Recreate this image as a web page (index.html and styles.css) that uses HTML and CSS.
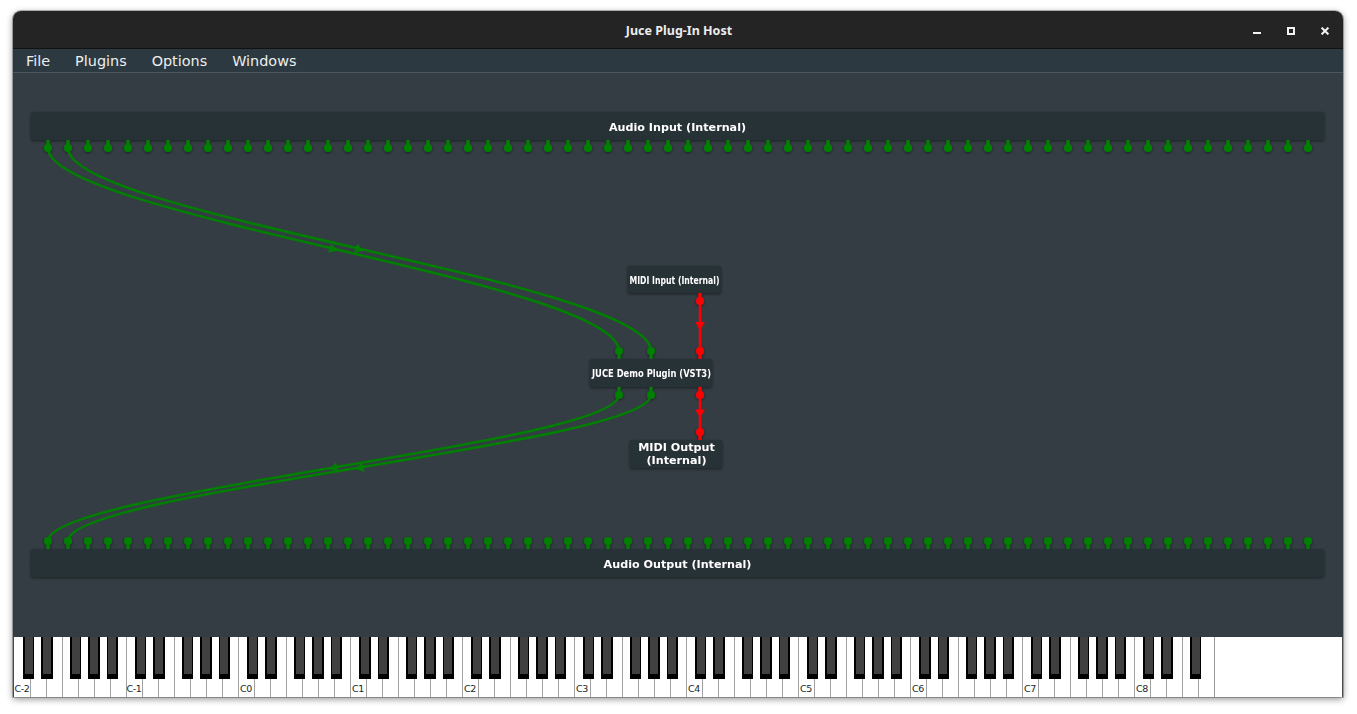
FILE: index.html
```html
<!DOCTYPE html>
<html lang="en">
<head>
<meta charset="utf-8">
<title>Juce Plug-In Host</title>
<link rel="stylesheet" href="styles.css">
</head>
<body>
<div class="window">
  <header class="titlebar">
    <div class="title">Juce Plug-In Host</div>
    <div class="controls">
      <span class="ctl"><svg width="8" height="8" viewBox="0 0 8 8"><rect class="ico" x="0" y="5" width="8" height="2"/></svg></span>
      <span class="ctl"><svg width="8" height="8" viewBox="0 0 8 8"><rect class="ico-line" x="1" y="1" width="6" height="6"/></svg></span>
      <span class="ctl"><svg width="8" height="8" viewBox="0 0 8 8"><path class="ico-line" d="M0.6 0.6 L7.4 7.4 M7.4 0.6 L0.6 7.4"/></svg></span>
    </div>
  </header>
  <nav class="menubar">
    <span class="menu-item">File</span>
    <span class="menu-item">Plugins</span>
    <span class="menu-item">Options</span>
    <span class="menu-item">Windows</span>
  </nav>
  <main class="graph">
    <svg class="graph-svg" width="1330" height="564" viewBox="13 73 1330 564">
      <defs>
        <filter id="sh" x="-10%" y="-40%" width="120%" height="190%">
          <feDropShadow dx="0" dy="1" stdDeviation="1.5" flood-color="#000" flood-opacity="0.5"/>
        </filter>
        <pattern id="pinsOut" x="38" y="140" width="20" height="16" patternUnits="userSpaceOnUse">
          <rect class="audio" x="8.4" y="0" width="3.2" height="8"/>
          <circle class="audio" cx="10" cy="8" r="4"/>
        </pattern>
        <pattern id="pinsIn" x="38" y="533" width="20" height="16" patternUnits="userSpaceOnUse">
          <rect class="audio" x="8.4" y="8" width="3.2" height="8"/>
          <circle class="audio" cx="10" cy="8" r="4"/>
        </pattern>
      </defs>

      <!-- Audio Input node -->
      <g class="node">
        <rect class="box" x="31" y="112" width="1293" height="28" rx="2"/>
        <rect class="pin-row-out" x="38" y="140" width="1280" height="16"/>
        <text class="node-label" x="677.5" y="127.2">Audio Input (Internal)</text>
      </g>

      <!-- Audio Output node -->
      <g class="node">
        <rect class="box" x="31" y="549" width="1293" height="28" rx="2"/>
        <rect class="pin-row-in" x="38" y="533" width="1280" height="16"/>
        <text class="node-label" x="677.5" y="564">Audio Output (Internal)</text>
      </g>

      <!-- MIDI Input node -->
      <g class="node">
        <rect class="box" x="628" y="266" width="93" height="27" rx="2"/>
        <rect class="midi" x="698.4" y="293" width="3.2" height="8"/>
        <circle class="midi" cx="700" cy="301" r="4"/>
        <text class="node-label" x="674.5" y="280" textLength="90" lengthAdjust="spacingAndGlyphs">MIDI Input (Internal)</text>
      </g>

      <!-- Plugin node -->
      <g class="node">
        <rect class="box" x="590" y="359" width="122" height="28" rx="2"/>
        <rect class="audio" x="617.4" y="351" width="3.2" height="8"/>
        <circle class="audio" cx="619" cy="351" r="4"/>
        <rect class="audio" x="649.4" y="351" width="3.2" height="8"/>
        <circle class="audio" cx="651" cy="351" r="4"/>
        <rect class="midi" x="698.4" y="351" width="3.2" height="8"/>
        <circle class="midi" cx="700" cy="351" r="4"/>
        <rect class="audio" x="617.4" y="387" width="3.2" height="8"/>
        <circle class="audio" cx="619" cy="395" r="4"/>
        <rect class="audio" x="649.4" y="387" width="3.2" height="8"/>
        <circle class="audio" cx="651" cy="395" r="4"/>
        <rect class="midi" x="698.4" y="387" width="3.2" height="8"/>
        <circle class="midi" cx="700" cy="395" r="4"/>
        <text class="node-label" x="651.5" y="373.5" textLength="119" lengthAdjust="spacingAndGlyphs">JUCE Demo Plugin (VST3)</text>
      </g>

      <!-- MIDI Output node -->
      <g class="node">
        <rect class="box" x="630" y="440" width="92" height="28" rx="2"/>
        <rect class="midi" x="698.4" y="432" width="3.2" height="8"/>
        <circle class="midi" cx="700" cy="432" r="4"/>
        <text class="node-label" x="676.5" y="447.5">MIDI Output</text>
        <text class="node-label" x="676.5" y="460.5">(Internal)</text>
      </g>

      <!-- Connections -->
      <path class="wire-audio" d="M48 148 C48 215, 619 282, 619 351"/>
      <path class="wire-audio" d="M68 148 C68 215, 651 282, 651 351"/>
      <path class="wire-audio" d="M619 395 C619 443.2, 48 491.4, 48 541"/>
      <path class="wire-audio" d="M651 395 C651 443.2, 68 491.4, 68 541"/>
      <path class="wire-midi" d="M700 301 L700 351"/>
      <path class="wire-midi" d="M700 395 L700 432"/>

      <polygon class="audio" points="-4,5 -4,-5 4,0" transform="translate(333.5 249.5) rotate(19.57)"/>
      <polygon class="audio" points="-4,5 -4,-5 4,0" transform="translate(359.5 249.5) rotate(19.2)"/>
      <polygon class="audio" points="-4,5 -4,-5 4,0" transform="translate(333.5 468) rotate(165.66)"/>
      <polygon class="audio" points="-4,5 -4,-5 4,0" transform="translate(359.5 468) rotate(165.94)"/>
      <polygon class="midi" points="-4,5 -4,-5 4,0" transform="translate(700 326) rotate(90)"/>
      <polygon class="midi" points="-4,5 -4,-5 4,0" transform="translate(700 413.5) rotate(90)"/>
    </svg>
  </main>
  <div class="keyboard">
    <div class="keys">
      <div class="octave"><span class="label">C-2</span></div>
      <div class="octave"><span class="label">C-1</span></div>
      <div class="octave"><span class="label">C0</span></div>
      <div class="octave"><span class="label">C1</span></div>
      <div class="octave"><span class="label">C2</span></div>
      <div class="octave"><span class="label">C3</span></div>
      <div class="octave"><span class="label">C4</span></div>
      <div class="octave"><span class="label">C5</span></div>
      <div class="octave"><span class="label">C6</span></div>
      <div class="octave"><span class="label">C7</span></div>
      <div class="octave partial"><span class="label">C8</span></div>
    </div>
  </div>
</div>
</body>
</html>
```

FILE: styles.css
```css
html, body {
  margin: 0;
  padding: 0;
  background: #ffffff;
}

body {
  width: 1357px;
  height: 714px;
  overflow: hidden;
}

.window {
  margin: 11px 0 0 13px;
  width: 1330px;
  height: 686px;
  display: flex;
  flex-direction: column;
  border-radius: 8px 8px 0 0;
  overflow: hidden;
  box-shadow: 0 2px 7px rgba(0, 0, 0, 0.45), 0 0 0 1px rgba(0, 0, 0, 0.25);
}

/* ---------- title bar ---------- */
.titlebar {
  height: 37px;
  flex: none;
  background: #242424;
  border-bottom: 1px solid #121212;
  display: grid;
  grid-template-columns: 1fr auto 1fr;
  align-items: center;
}

.title {
  grid-column: 2;
  font-family: "Noto Sans", "DejaVu Sans", sans-serif;
  font-weight: 700;
  font-size: 12.5px;
  color: #ececec;
  padding-top: 1px;
  padding-left: 2px;
}

.controls {
  grid-column: 3;
  justify-self: end;
  display: flex;
  padding-right: 1px;
  padding-top: 2px;
}

.ctl {
  width: 34px;
  display: flex;
  justify-content: center;
  align-items: center;
}

.ctl svg {
  display: block;
}

.ico {
  fill: #f2f2f2;
}

.ico-line {
  fill: none;
  stroke: #f2f2f2;
  stroke-width: 2;
}

/* ---------- menu bar ---------- */
.menubar {
  height: 23px;
  flex: none;
  background: #2c3940;
  border-bottom: 1px solid #4c575d;
  display: flex;
  align-items: center;
  gap: 25px;
  padding-left: 13px;
  font-family: "DejaVu Sans", sans-serif;
  font-size: 14.4px;
  color: #eeeeee;
}

.menu-item {
  line-height: 23px;
  padding-top: 2px;
}

/* ---------- graph ---------- */
.graph {
  flex: none;
  height: 564px;
  background: #343d43;
}

.graph-svg {
  display: block;
}

.node {
  filter: url(#sh);
}

.box {
  fill: #283036;
}

.node-label {
  font-family: "DejaVu Sans", sans-serif;
  font-weight: 700;
  font-size: 11.17px;
  fill: #ffffff;
  text-anchor: middle;
  dominant-baseline: central;
}

.audio {
  fill: #008000;
}

.midi {
  fill: #ff0000;
}

.pin-row-out {
  fill: url(#pinsOut);
}

.pin-row-in {
  fill: url(#pinsIn);
}

.wire-audio {
  fill: none;
  stroke: #008000;
  stroke-width: 2.5;
}

.wire-midi {
  fill: none;
  stroke: #ff0000;
  stroke-width: 2.5;
}

/* ---------- keyboard ---------- */
.keyboard {
  flex: none;
  height: 60px;
  background: #ffffff;
  border-left: 1px solid #4a4a4a;
  border-right: 1px solid #4a4a4a;
  display: flex;
}

.keys {
  display: flex;
  border-right: 1px solid #9a9a9a;
}

.octave {
  width: 112px;
  height: 60px;
  display: flex;
  align-items: flex-end;
  background:
    linear-gradient(90deg,
      transparent 10.7px, #404040 10.7px 19.1px,
      transparent 19.1px 28.9px, #404040 28.9px 37.3px,
      transparent 37.3px 57.6px, #404040 57.6px 66px,
      transparent 66px 75.8px, #404040 75.8px 84.2px,
      transparent 84.2px 94px, #404040 94px 102.4px,
      transparent 102.4px) 0 0 / 112px 37px no-repeat,
    linear-gradient(90deg,
      transparent 9.3px, #000 9.3px 20.5px,
      transparent 20.5px 27.5px, #000 27.5px 38.7px,
      transparent 38.7px 56.2px, #000 56.2px 67.4px,
      transparent 67.4px 74.4px, #000 74.4px 85.6px,
      transparent 85.6px 92.6px, #000 92.6px 103.8px,
      transparent 103.8px) 0 0 / 112px 42px no-repeat,
    repeating-linear-gradient(90deg, #a0a0a0 0 1px, #ffffff 1px 16px);
}

.octave:first-child {
  background:
    linear-gradient(90deg,
      transparent 10.7px, #404040 10.7px 19.1px,
      transparent 19.1px 28.9px, #404040 28.9px 37.3px,
      transparent 37.3px 57.6px, #404040 57.6px 66px,
      transparent 66px 75.8px, #404040 75.8px 84.2px,
      transparent 84.2px 94px, #404040 94px 102.4px,
      transparent 102.4px) 0 0 / 112px 37px no-repeat,
    linear-gradient(90deg,
      transparent 9.3px, #000 9.3px 20.5px,
      transparent 20.5px 27.5px, #000 27.5px 38.7px,
      transparent 38.7px 56.2px, #000 56.2px 67.4px,
      transparent 67.4px 74.4px, #000 74.4px 85.6px,
      transparent 85.6px 92.6px, #000 92.6px 103.8px,
      transparent 103.8px) 0 0 / 112px 42px no-repeat,
    linear-gradient(90deg, #ffffff 0 1px, transparent 1px) 0 0 / 16px 60px no-repeat,
    repeating-linear-gradient(90deg, #a0a0a0 0 1px, #ffffff 1px 16px);
}

.octave.partial {
  width: 80px;
  background:
    linear-gradient(90deg,
      transparent 10.7px, #404040 10.7px 19.1px,
      transparent 19.1px 28.9px, #404040 28.9px 37.3px,
      transparent 37.3px 57.6px, #404040 57.6px 66px,
      transparent 66px) 0 0 / 80px 37px no-repeat,
    linear-gradient(90deg,
      transparent 9.3px, #000 9.3px 20.5px,
      transparent 20.5px 27.5px, #000 27.5px 38.7px,
      transparent 38.7px 56.2px, #000 56.2px 67.4px,
      transparent 67.4px) 0 0 / 80px 42px no-repeat,
    repeating-linear-gradient(90deg, #a0a0a0 0 1px, #ffffff 1px 16px);
}

.label {
  width: 16px;
  padding-bottom: 3px;
  text-align: center;
  font-family: "DejaVu Sans", sans-serif;
  font-size: 9.5px;
  letter-spacing: -0.4px;
  line-height: 11px;
  color: #1e1e1e;
  white-space: nowrap;
}
```
